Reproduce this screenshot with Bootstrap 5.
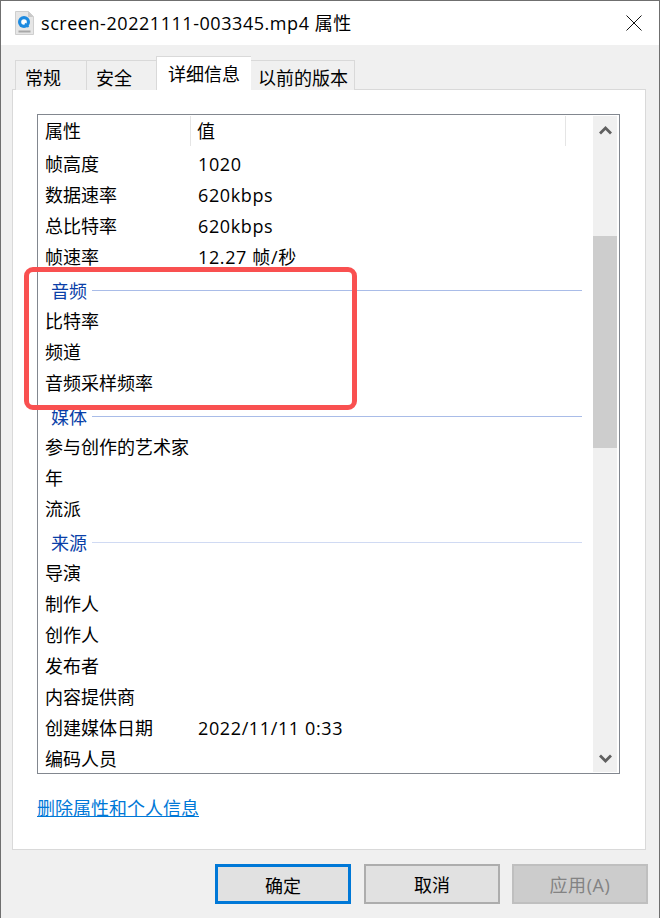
<!DOCTYPE html>
<html lang="zh-CN">
<head>
<meta charset="utf-8">
<title>属性</title>
<link href="https://cdn.jsdelivr.net/npm/bootstrap@5.3.0/dist/css/bootstrap.min.css" rel="stylesheet">
<style>
html,body{margin:0;background:#f0f0f0;}
body{font-family:"Open Sans","Noto Sans CJK SC",sans-serif;font-size:18px;line-height:24px;color:#000;}
.win{width:660px;height:918px;border:1px solid #6f6f6f;border-bottom:0;overflow:hidden;background:#f0f0f0;}
.titlebar{height:44px;background:#fff;padding-left:14px;}
.titlebar svg.file{width:19px;height:24px;margin-right:7px;}
.wintitle{letter-spacing:.55px;}
.closex{width:16px;height:16px;margin-left:auto;margin-right:17px;}
.tabstrip{padding:12px 0 0 14px;height:45px;margin-bottom:-1px;position:relative;z-index:1;}
.tabx{height:30px;align-self:flex-end;background:#f0f0f0;border:1px solid #d9d9d9;border-right-width:0;border-bottom:0;line-height:34px;overflow:hidden;}
.tabx.t1{width:71px;padding-left:9px;}
.tabx.t2{width:70px;padding-left:9px;}
.tabx.t3{width:95px;height:34px;background:#fff;line-height:35px;padding-left:11px;}
.tabx.t4{width:104px;border-left:0;border-right-width:1px;padding-left:7px;}
.panel{margin-left:11px;width:634px;height:761px;background:#fff;border:1px solid #d9d9d9;padding:24px 24px 0 24px;}
.listbox{width:583px;height:660px;border:1px solid #82878f;overflow:hidden;}
.listcol{width:555px;overflow:hidden;}
.hdr{height:34px;padding-top:1px;}
.hdr .c1{width:153px;padding-left:7px;height:30px;border-right:1px solid #e5e5e5;line-height:31px;}
.hdr .c2{padding-left:6px;line-height:31px;height:30px;width:375px;border-right:1px solid #e5e5e5;}
.rowx{height:31px;line-height:31px;padding-left:7px;white-space:nowrap;}
.rowx .k{width:153px;}
.rowx .v{letter-spacing:.62px;}
.grp{height:31px;margin-top:2px;padding-left:13px;color:#0a3fa8;line-height:30px;}
.grp i{flex:none;width:490px;height:1px;background:#a9bce8;margin-left:5px;}
.grp i.lite{background:#d0daf3;}
.sb{width:24px;margin:1px 2px 1px auto;background:#f0f0f0;}
.sbbtn{height:28px;}
.sbbtn svg{width:13px;height:9px;}
.sbgap{height:92px;}
.thumb{height:212px;background:#cdcdcd;}
.linkrow{margin-top:22px;}
.linkrow a{color:#0078d7;text-decoration:underline;}
.foot{padding:14px 0 0 214px;}
.bx{width:136px;height:40px;padding:2px 0 0;border-radius:0;background:#e1e1e1;border:2px solid #adadad;color:#000;font:inherit;line-height:34px;}
.bx.def{border:3px solid #0078d7;}
.bx.off{background:#cccccc;border-color:#bfbfbf;color:#838383;opacity:1;letter-spacing:.6px;}
.gapa{margin-right:13px;}
.gapb{margin-right:12px;}
.redmark{position:absolute;left:23px;top:266px;width:333px;height:143px;border:5px solid #f95050;border-radius:9px;pointer-events:none;}
</style>
</head>
<body>
<div class="win position-relative">
  <div class="titlebar d-flex align-items-center">
    <svg class="file" viewBox="0 0 19 24">
      <path d="M.5.5h13l5 5v18H.5z" fill="#e6e6e6" stroke="#cfcfcf"/>
      <path d="M13 .5v5.500h5.500z" fill="#c8c8c8"/>
      <circle cx="9" cy="11" r="6" fill="#1c8ae0"/>
      <circle cx="9" cy="11" r="2.800" fill="#fff"/>
      <path d="M10 12.500l3.500 3.500" stroke="#1c8ae0" stroke-width="2"/>
      <rect x="3.500" y="19.500" width="12" height="2" fill="#a8a8a8"/>
    </svg>
    <span class="wintitle">screen-20221111-003345.mp4 属性</span>
    <svg class="closex" viewBox="0 0 16 16"><path d="M.5.5l15 15M15.5.5l-15 15" stroke="#111" stroke-width="1" fill="none"/></svg>
  </div>
  <div class="tabstrip d-flex">
    <div class="tabx t1">常规</div>
    <div class="tabx t2">安全</div>
    <div class="tabx t3">详细信息</div>
    <div class="tabx t4">以前的版本</div>
  </div>
  <div class="panel">
    <div class="listbox d-flex">
      <div class="listcol">
        <div class="hdr d-flex"><div class="c1">属性</div><div class="c2">值</div></div>
        <div class="rowx d-flex"><div class="k">帧高度</div><div class="v">1020</div></div>
        <div class="rowx d-flex"><div class="k">数据速率</div><div class="v">620kbps</div></div>
        <div class="rowx d-flex"><div class="k">总比特率</div><div class="v">620kbps</div></div>
        <div class="rowx d-flex"><div class="k">帧速率</div><div class="v">12.27 帧/秒</div></div>
        <div class="grp d-flex align-items-center"><span>音频</span><i></i></div>
        <div class="rowx">比特率</div>
        <div class="rowx">频道</div>
        <div class="rowx">音频采样频率</div>
        <div class="grp d-flex align-items-center"><span>媒体</span><i></i></div>
        <div class="rowx">参与创作的艺术家</div>
        <div class="rowx">年</div>
        <div class="rowx">流派</div>
        <div class="grp d-flex align-items-center"><span>来源</span><i class="lite"></i></div>
        <div class="rowx">导演</div>
        <div class="rowx">制作人</div>
        <div class="rowx">创作人</div>
        <div class="rowx">发布者</div>
        <div class="rowx">内容提供商</div>
        <div class="rowx d-flex"><div class="k">创建媒体日期</div><div class="v">2022/11/11 0:33</div></div>
        <div class="rowx">编码人员</div>
      </div>
      <div class="sb d-flex flex-column">
        <div class="sbbtn d-flex align-items-center justify-content-center"><svg viewBox="0 0 13 9"><path d="M1 7.500l5.500-5.500L12 7.500" fill="none" stroke="#606060" stroke-width="2.800"/></svg></div>
        <div class="sbgap"></div>
        <div class="thumb"></div>
        <div class="sbbtn mt-auto d-flex align-items-center justify-content-center"><svg viewBox="0 0 13 9"><path d="M1 1.500l5.500 5.500L12 1.500" fill="none" stroke="#606060" stroke-width="2.800"/></svg></div>
      </div>
    </div>
    <div class="linkrow"><a href="#">删除属性和个人信息</a></div>
  </div>
  <div class="foot d-flex">
    <button class="btn bx def gapa" type="button">确定</button>
    <button class="btn bx gapb" type="button">取消</button>
    <button class="btn bx off" type="button" disabled>应用(A)</button>
  </div>
  <div class="redmark"></div>
</div>
<script src="https://cdn.jsdelivr.net/npm/bootstrap@5.3.0/dist/js/bootstrap.bundle.min.js"></script>
</body>
</html>
